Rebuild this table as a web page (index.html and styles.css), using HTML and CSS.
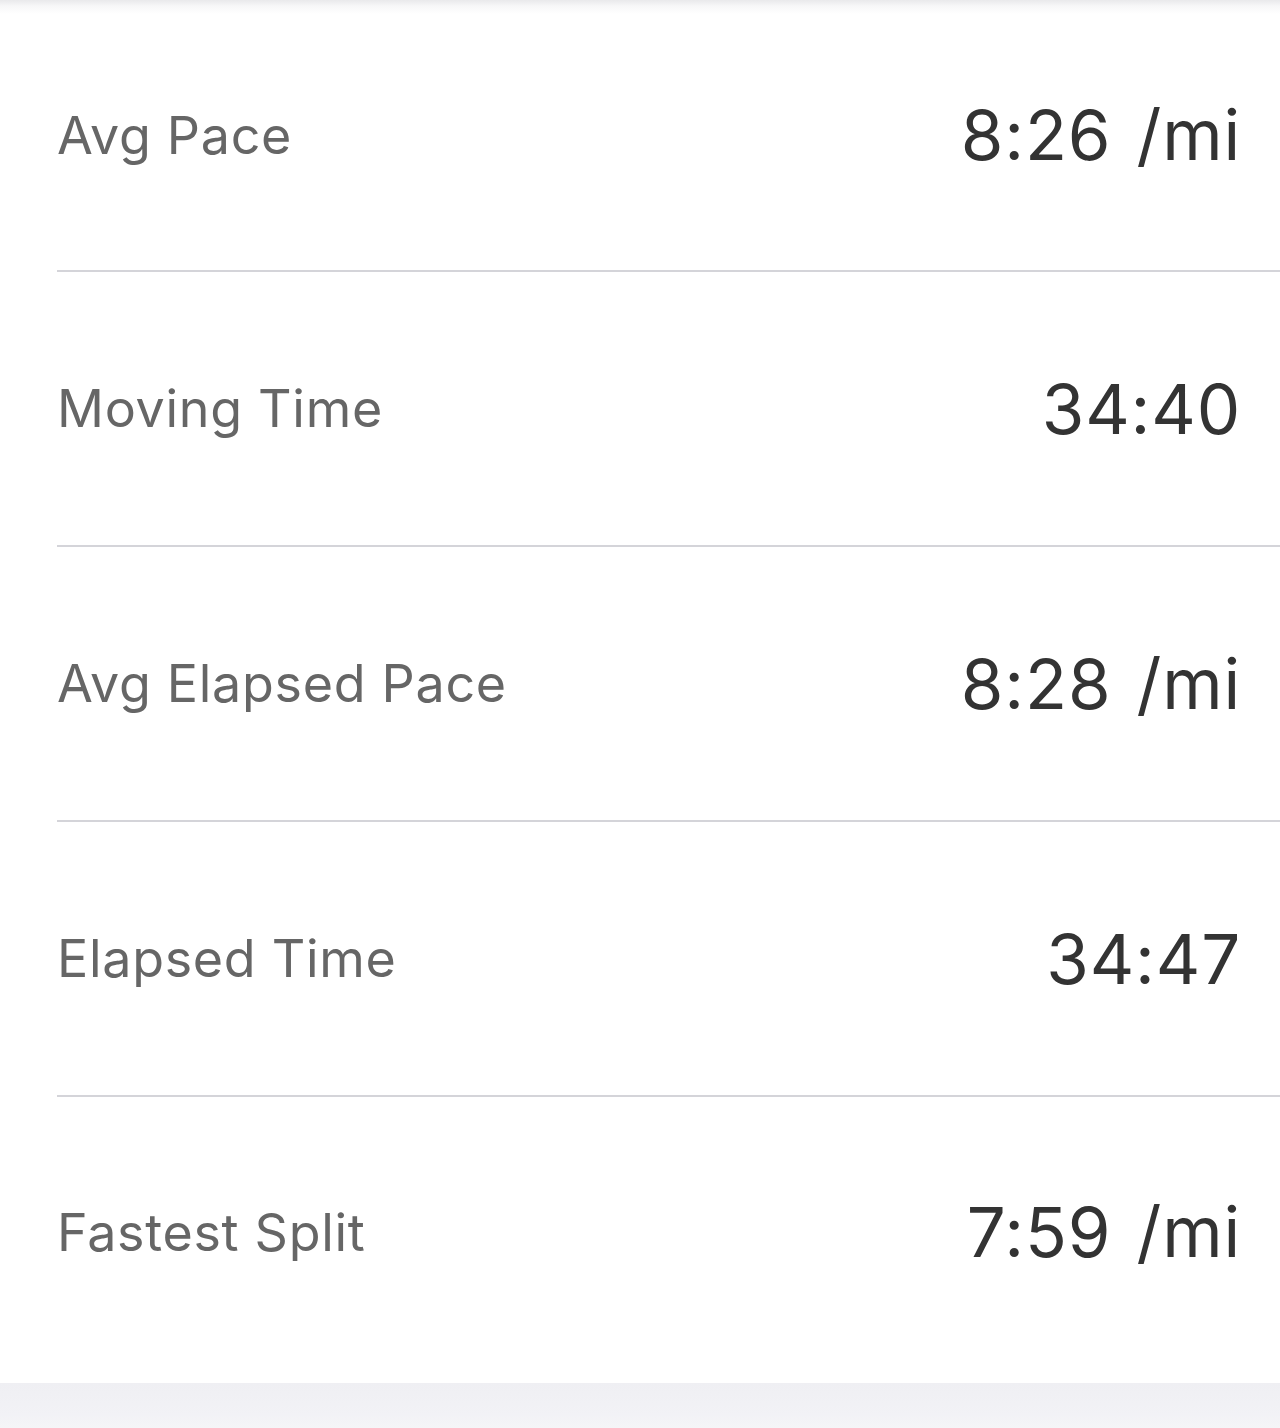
FILE: index.html
```html
<!DOCTYPE html>
<html>
<head>
<meta charset="utf-8">
<link rel="stylesheet" href="styles.css">
</head>
<body>
<div class="page">
  <div class="card">
    <div class="row first"><span class="label">Avg Pace</span><span class="value">8:26 /mi</span></div>
    <div class="row"><span class="label">Moving Time</span><span class="value">34:40</span></div>
    <div class="row"><span class="label">Avg Elapsed Pace</span><span class="value">8:28 /mi</span></div>
    <div class="row"><span class="label">Elapsed Time</span><span class="value">34:47</span></div>
    <div class="row last"><span class="label">Fastest Split</span><span class="value">7:59 /mi</span></div>
  </div>
  <div class="footer"></div>
</div>
</body>
</html>
```
FILE: styles.css
```css
html, body {
  margin: 0;
  padding: 0;
  background: #ffffff;
}
.page {
  width: 1280px;
  height: 1428px;
  display: flex;
  flex-direction: column;
  font-family: Inter, "Noto Sans", sans-serif;
}
.card {
  background: linear-gradient(to bottom, #e9e9eb 0px, #f7f7f8 6px, #ffffff 14px);
  padding-left: 57px;
  height: 1383px;
  box-sizing: border-box;
}
.row {
  height: 275px;
  box-sizing: border-box;
  border-bottom: 2px solid #d4d4d9;
  display: flex;
  align-items: center;
  justify-content: space-between;
  padding-right: 39px;
}
.row.first {
  height: 272px;
}
.row.last {
  border-bottom: none;
  height: 286px;
  padding-bottom: 16px;
}
.label {
  font-size: 52px;
  color: #666666;
  letter-spacing: 0.7px;
}
.value {
  font-size: 69px;
  color: #333333;
  letter-spacing: 0.8px;
  word-spacing: 5px;
}
.footer {
  flex: 1;
  background: linear-gradient(to bottom, #efeff3, #f2f2f6 70%, #f5f5f7);
}
```
